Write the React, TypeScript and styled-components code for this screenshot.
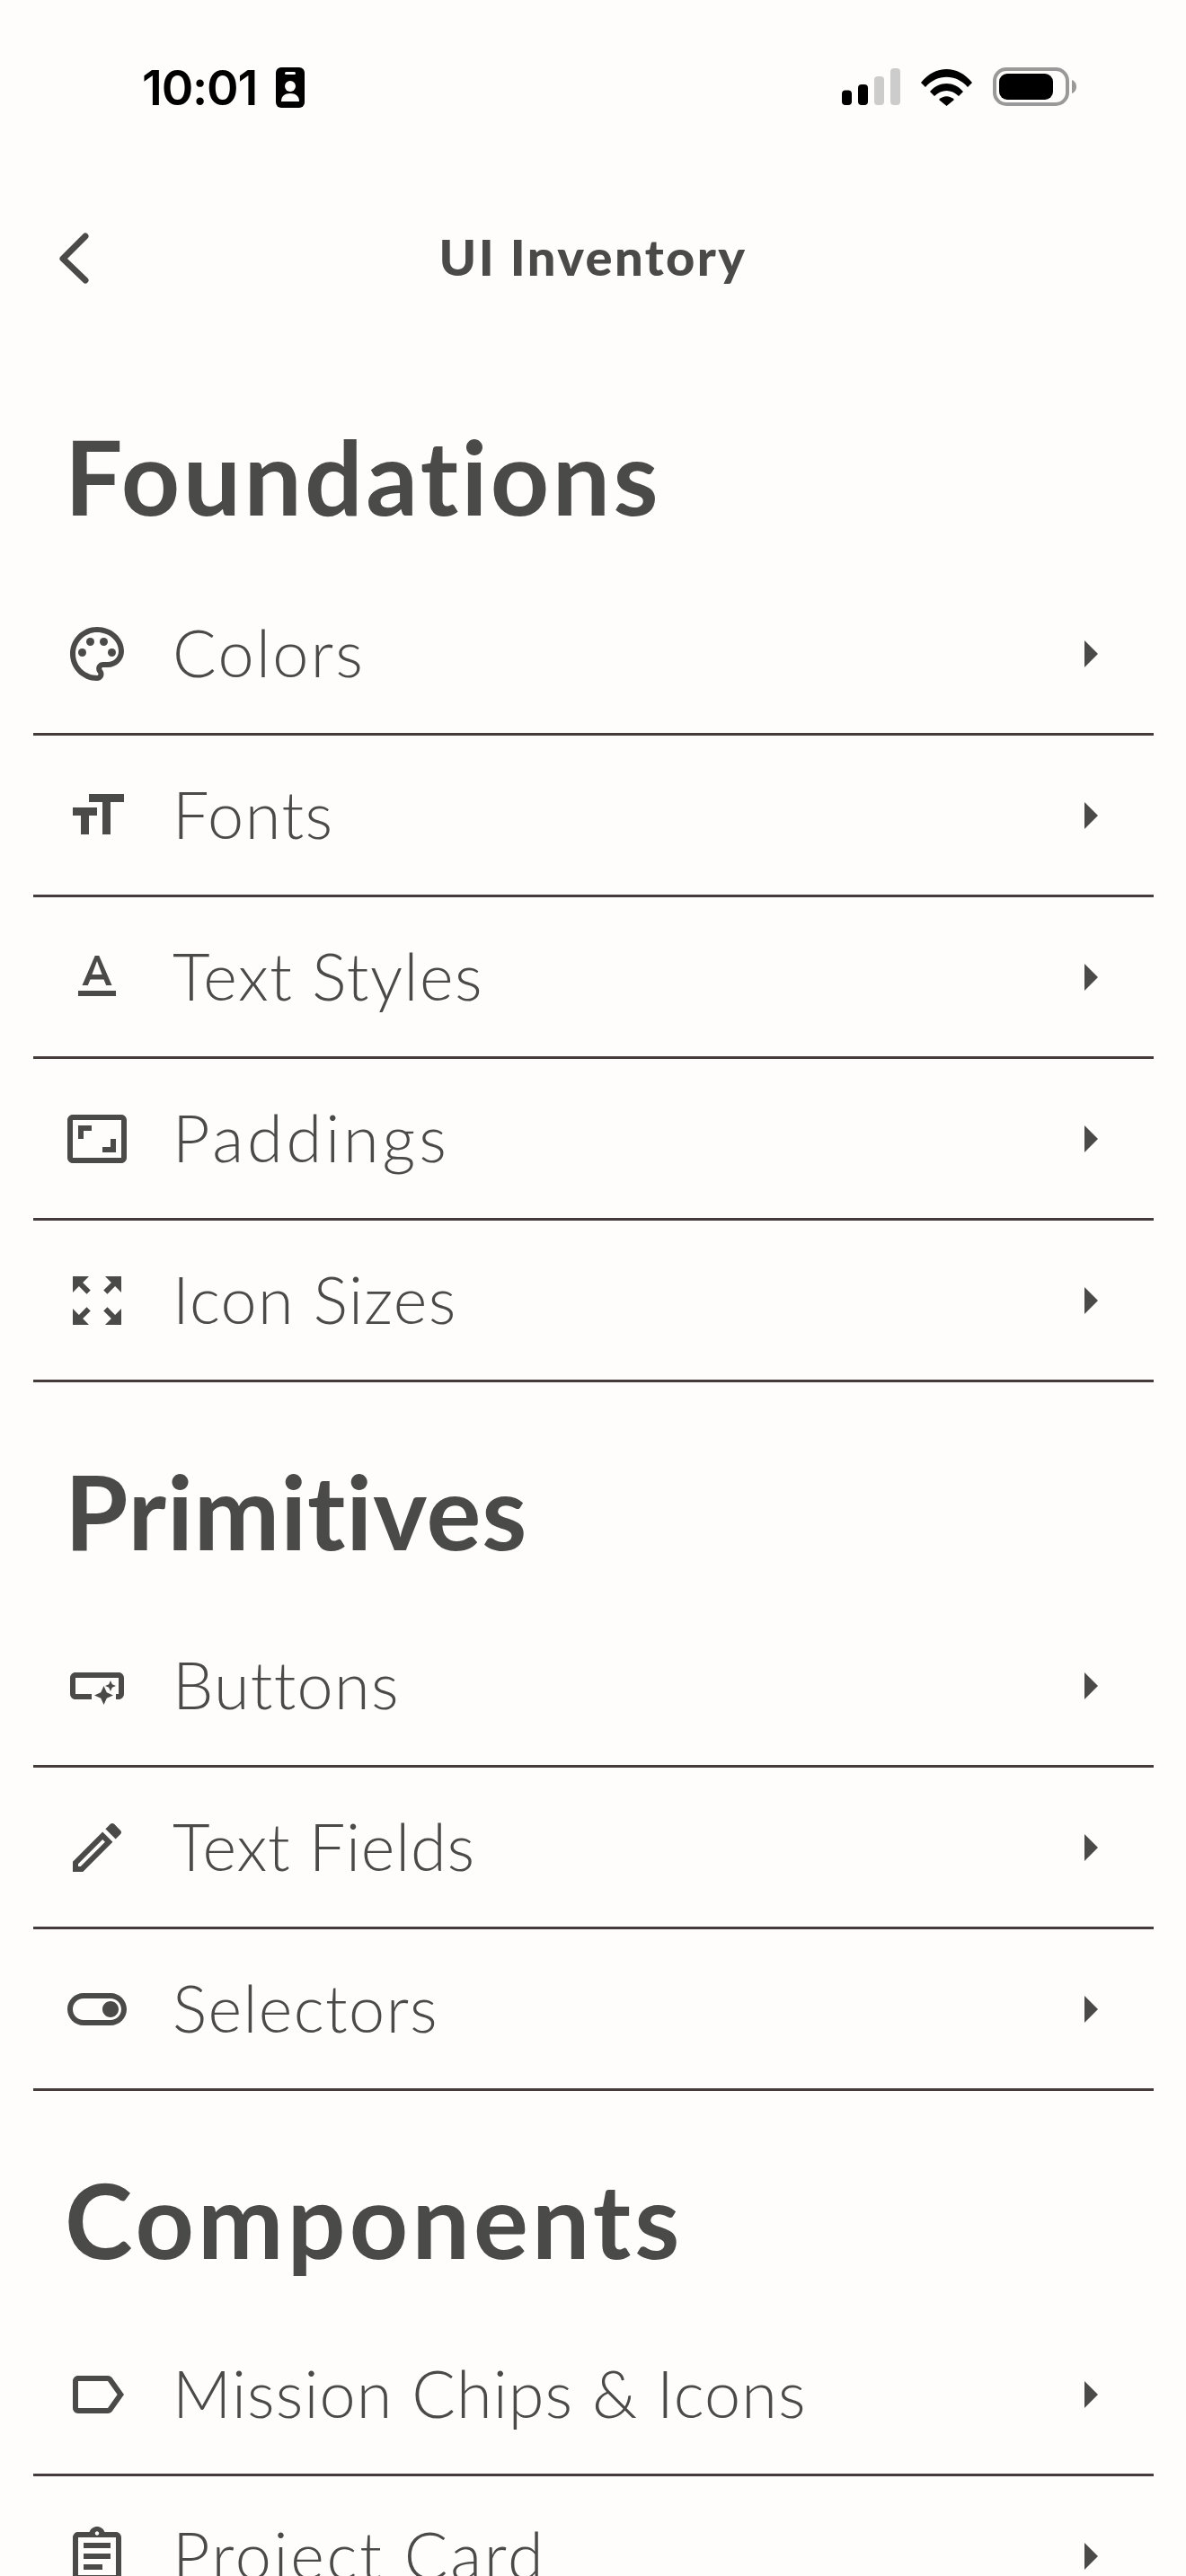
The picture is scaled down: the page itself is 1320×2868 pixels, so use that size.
import React from "react";
import styled, { createGlobalStyle } from "styled-components";

const Global = createGlobalStyle`
  html, body { margin: 0; padding: 0; height: 2868px; overflow: hidden; background: #fefdfb; }
  #root { height: 2868px; overflow: hidden; }
`;

const Page = styled.div`
  width: 1320px;
  background: #fefdfb;
  color: #4a4a48;
  font-family: Lato, "Liberation Sans", sans-serif;
  font-variant-ligatures: none;
`;

const StatusBar = styled.div`
  height: 194px;
  box-sizing: border-box;
  padding: 75px 122px 0 158px;
  display: flex;
  justify-content: space-between;
  align-items: flex-start;
`;

const StatusLeft = styled.div`
  display: flex;
  align-items: flex-start;
  gap: 21px;
`;

const Time = styled.span`
  font-family: Inter, "Liberation Sans", sans-serif;
  font-weight: 600;
  font-size: 54px;
  line-height: 45px;
  letter-spacing: -1.2px;
  color: #000;
`;

const StatusRight = styled.div`
  display: flex;
  align-items: flex-start;
`;

const NavBar = styled.div`
  height: 193px;
  padding: 0 60px 7px;
  box-sizing: border-box;
  display: grid;
  grid-template-columns: 1fr auto 1fr;
  align-items: center;
`;

const NavTitle = styled.h1`
  margin: -2px 0 0;
  font-size: 56px;
  line-height: 1;
  font-weight: 900;
  letter-spacing: 2.4px;
  color: #4a4a48;
`;

const SectionTitle = styled.h2<{ $h: number; $track: number }>`
  margin: 0;
  box-sizing: border-box;
  padding: 86px 0 0 72px;
  height: ${(p) => p.$h}px;
  font-size: 114px;
  line-height: 1;
  font-weight: 700;
  letter-spacing: ${(p) => p.$track}px;
  color: #4a4a48;
`;

const Section = styled.section`
  padding: 0 36px 0 37px;
`;

const Row = styled.div`
  height: 180px;
  box-sizing: border-box;
  border-bottom: 3px solid #453b3b;
  display: flex;
  align-items: center;
  padding: 0 35px 0 35px;
`;

const RowIcon = styled.svg`
  width: 72px;
  height: 72px;
  flex: none;
  fill: #4a4a48;
`;

const RowLabel = styled.span<{ $track: number }>`
  flex: 1;
  margin: -3px 0 0 48px;
  font-size: 72px;
  font-weight: 300;
  line-height: 1;
  letter-spacing: ${(p) => p.$track}px;
`;

const Caret = styled.svg`
  width: 72px;
  height: 72px;
  flex: none;
  fill: #4a4a48;
`;

const P = {
  palette: (
    <>
      <path d="M12 22C6.49 22 2 17.51 2 12S6.49 2 12 2s10 4.04 10 9c0 3.31-2.69 6-6 6h-1.77c-.28 0-.5.22-.5.5 0 .12.05.23.13.33.41.47.64 1.06.64 1.67 0 1.38-1.12 2.5-2.5 2.5zm0-18c-4.41 0-8 3.59-8 8s3.59 8 8 8c.28 0 .5-.22.5-.5 0-.16-.08-.28-.14-.35-.41-.46-.63-1.05-.63-1.65 0-1.38 1.12-2.5 2.5-2.5H16c2.21 0 4-1.79 4-4 0-3.86-3.59-7-8-7z" />
      <circle cx="6.5" cy="11.5" r="1.5" />
      <circle cx="9.5" cy="7.5" r="1.5" />
      <circle cx="14.5" cy="7.5" r="1.5" />
      <circle cx="17.5" cy="11.5" r="1.5" />
    </>
  ),
  fonts: <path d="M9 4v3h5v12h3V7h5V4H9zm-6 8h3v7h3v-7h3V9H3v3z" />,
  text: <path d="M5 17v2h14v-2H5zm4.5-4.2h5l.9 2.2h2.1L12.75 4h-1.5L6.5 15h2.1l.9-2.2zM12 5.98L13.87 11h-3.74L12 5.98z" />,
  pad: <path d="M19 12h-2v3h-3v2h5v-5zM7 9h3V7H5v5h2V9zm14-6H3c-1.1 0-2 .9-2 2v14c0 1.1.9 2 2 2h18c1.1 0 2-.9 2-2V5c0-1.1-.9-2-2-2zm0 16.01H3V4.99h18v14.02z" />,
  sizes: <path d="M15 3l2.3 2.3-2.89 2.87 1.42 1.42L18.7 6.7 21 9V3zM3 9l2.3-2.3 2.87 2.89 1.42-1.42L6.7 5.3 9 3H3zm6 12l-2.3-2.3 2.89-2.87-1.42-1.42L5.3 17.3 3 15v6zm12-6l-2.3 2.3-2.87-2.89-1.42 1.42 2.89 2.87L15 21h6z" />,
  button: <path d="M22 9v6c0 1.1-.9 2-2 2h-1v-2h1V9H4v6h6v2H4c-1.1 0-2-.9-2-2V9c0-1.1.9-2 2-2h16c1.1 0 2 .9 2 2zM14.5 19l1.09-2.41L18 15.5l-2.41-1.09L14.5 12l-1.09 2.41L11 15.5l2.41 1.09L14.5 19zM17 14l.62-1.38L19 12l-1.38-.62L17 10l-.62 1.38L15 12l1.38.62L17 14z" />,
  edit: <path d="M14.06 9.02l.92.92L5.92 19H5v-.92l9.06-9.06M17.66 3c-.25 0-.51.1-.7.29l-1.83 1.83 3.75 3.75 1.83-1.83c.39-.39.39-1.02 0-1.41l-2.34-2.34c-.2-.2-.45-.29-.71-.29zm-3.6 3.19L3 17.25V21h3.75L17.81 9.94l-3.75-3.75z" />,
  toggle: <path d="M17 6H7c-3.31 0-6 2.69-6 6s2.69 6 6 6h10c3.31 0 6-2.69 6-6s-2.69-6-6-6zm0 10H7c-2.21 0-4-1.79-4-4s1.79-4 4-4h10c2.21 0 4 1.79 4 4s-1.79 4-4 4zm0-7c-1.66 0-3 1.34-3 3s1.34 3 3 3 3-1.34 3-3-1.34-3-3-3z" />,
  label: <path d="M17.63 5.84C17.27 5.33 16.67 5 16 5L5 5.01C3.9 5.01 3 5.9 3 7v10c0 1.1.9 1.99 2 1.99L16 19c.67 0 1.27-.33 1.63-.84L22 12l-4.37-6.16zM16 17H5V7h11l3.55 5L16 17z" />,
  card: <path d="M7 15h7v2H7zm0-4h10v2H7zm0-4h10v2H7zm12-4h-4.18C14.4 1.84 13.3 1 12 1c-1.3 0-2.4.84-2.82 2H5c-.14 0-.27.01-.4.04-.39.08-.74.28-1.01.55-.18.18-.33.4-.43.64-.1.23-.16.49-.16.77v14c0 .27.06.54.16.78s.25.45.43.64c.27.27.62.47 1.01.55.13.02.26.03.4.03h14c1.1 0 2-.9 2-2V5c0-1.1-.9-2-2-2zm-7-.25c.41 0 .75.34.75.75s-.34.75-.75.75-.75-.34-.75-.75.34-.75.75-.75zM19 19H5V5h14v14z" />,
};

const Item = ({ icon, label, track }: { icon: React.ReactNode; label: string; track: number }) => (
  <Row>
    <RowIcon viewBox="0 0 24 24">{icon}</RowIcon>
    <RowLabel $track={track}>{label}</RowLabel>
    <Caret viewBox="0 0 24 24">
      <path d="M10 17l5-5-5-5v10z" />
    </Caret>
  </Row>
);

export default function App() {
  return (
    <Page>
      <Global />
      <StatusBar>
        <StatusLeft>
          <Time>10:01</Time>
          <svg width="32" height="45" viewBox="0 0 32 45">
            <rect width="32" height="45" rx="6" fill="#000" />
            <rect x="10" y="5" width="12" height="3" rx="1.5" fill="#fefdfb" />
            <circle cx="16" cy="21" r="6" fill="#fefdfb" />
            <path d="M6 38c0-6 4-9 10-9s10 3 10 9z" fill="#fefdfb" />
          </svg>
        </StatusLeft>
        <StatusRight>
          <svg width="261" height="46" viewBox="0 0 261 46">
            <rect x="0" y="25.5" width="11" height="16.5" rx="4" fill="#000" />
            <rect x="18" y="19" width="11" height="23" rx="4" fill="#000" />
            <rect x="36" y="10" width="11" height="32" rx="4" fill="#ccc" />
            <rect x="54" y="1" width="11" height="41" rx="4" fill="#ccc" />
            <path d="M88 17 C104 -3 129 -3 145 17 L140 22 C127 7 106 7 93 22 Z" fill="#000" />
            <path d="M98 27 C108 15 125 15 135 27 L130 32 C122 24 111 24 103 32 Z" fill="#000" />
            <path d="M108 36 C113 31 120 31 125 36 L116.5 43 Z" fill="#000" />
            <rect x="170" y="2" width="81" height="39" rx="13" fill="none" stroke="#999" strokeWidth="4" />
            <rect x="175" y="7" width="60" height="29" rx="9" fill="#000" />
            <path d="M256 14 C259 15 261 18 261 21.5 C261 25 259 28 256 29 Z" fill="#999" />
          </svg>
        </StatusRight>
      </StatusBar>
      <NavBar>
        <svg width="44" height="66" viewBox="0 0 44 66" fill="none">
          <path d="M35 9 L10 34 L35 58" stroke="#4a4a48" strokeWidth="7" strokeLinecap="round" strokeLinejoin="round" />
        </svg>
        <NavTitle>UI Inventory</NavTitle>
      </NavBar>
      <SectionTitle $h={252} $track={3.4}>Foundations</SectionTitle>
      <Section>
        <Item icon={P.palette} label="Colors" track={2.4} />
        <Item icon={P.fonts} label="Fonts" track={1.5} />
        <Item icon={P.text} label="Text Styles" track={1.5} />
        <Item icon={P.pad} label="Paddings" track={3.9} />
        <Item icon={P.sizes} label="Icon Sizes" track={1.3} />
      </Section>
      <SectionTitle $h={249} $track={0.9}>Primitives</SectionTitle>
      <Section>
        <Item icon={P.button} label="Buttons" track={1.3} />
        <Item icon={P.edit} label="Text Fields" track={0.8} />
        <Item icon={P.toggle} label="Selectors" track={1.4} />
      </Section>
      <SectionTitle $h={249} $track={4.2}>Components</SectionTitle>
      <Section>
        <Item icon={P.label} label="Mission Chips & Icons" track={1.1} />
        <Item icon={P.card} label="Project Card" track={2.7} />
      </Section>
    </Page>
  );
}
